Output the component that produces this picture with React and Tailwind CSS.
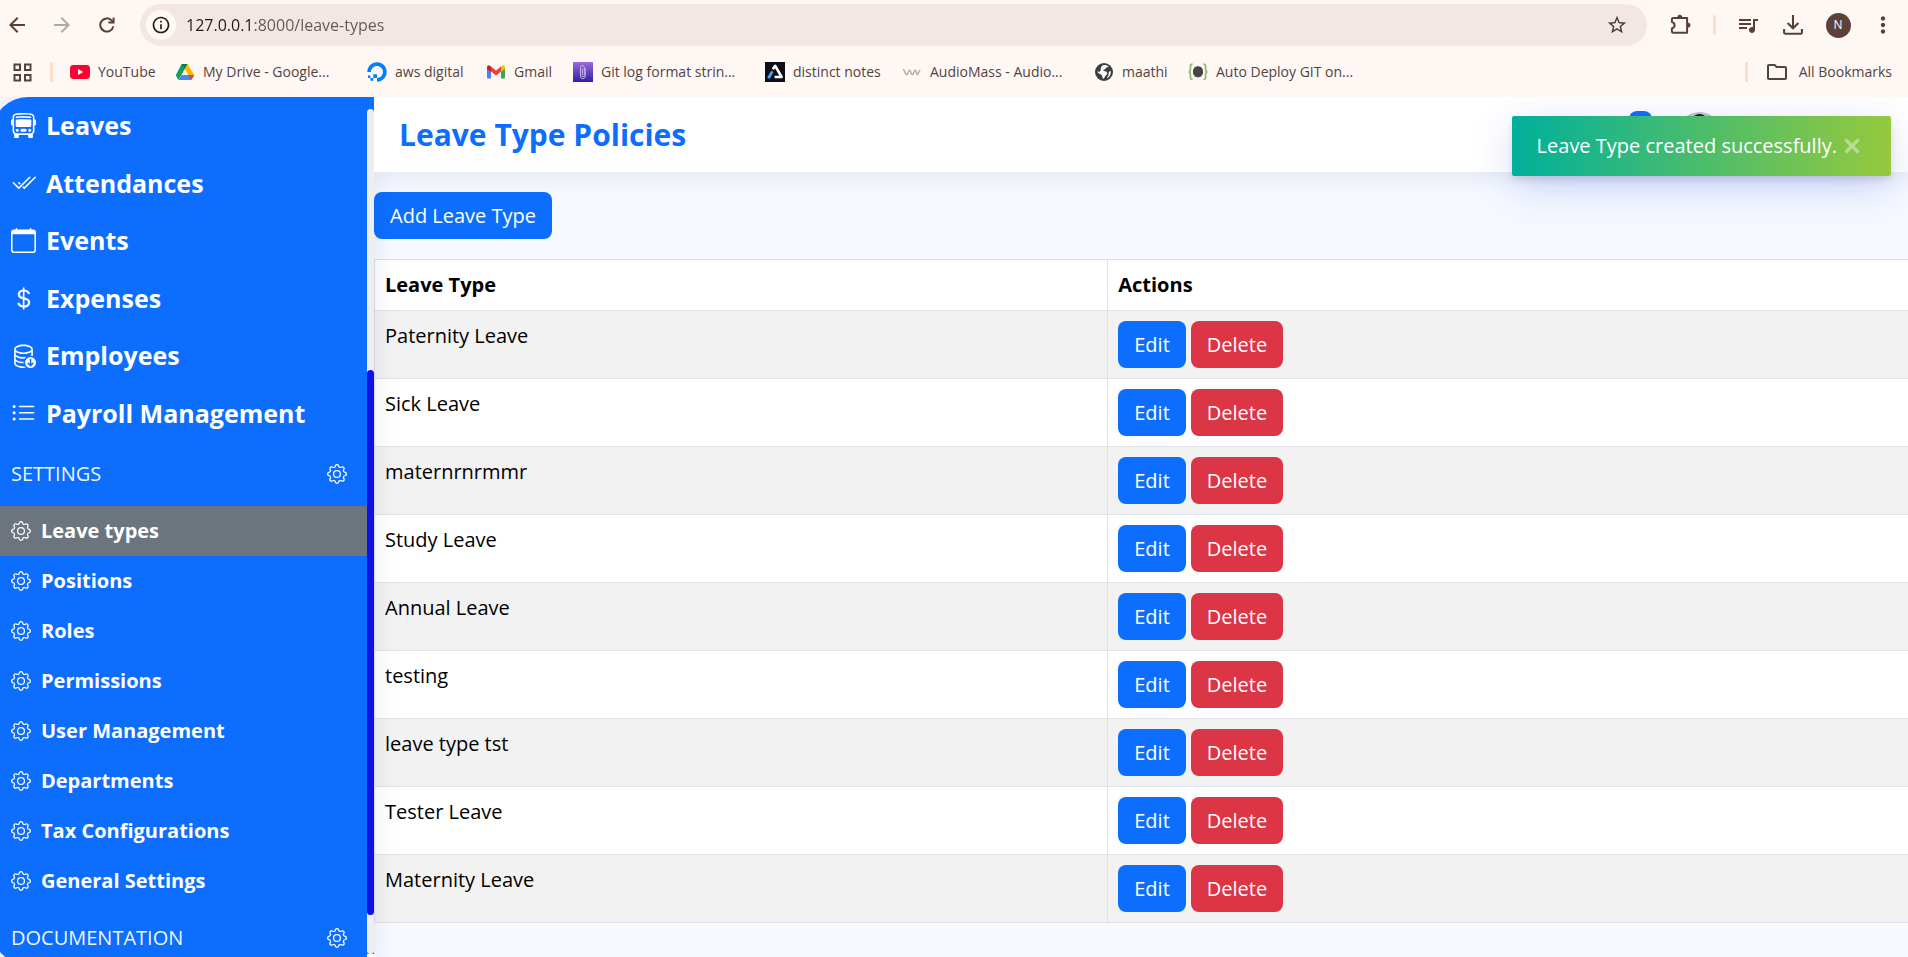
import React from "react";
import {
  BsBusFront,
  BsCheck2All,
  BsCalendar,
  BsCurrencyDollar,
  BsDatabaseDown,
  BsListUl,
  BsGear,
  BsBell,
} from "react-icons/bs";
import {
  MdArrowBack,
  MdArrowForward,
  MdInfoOutline,
  MdStarBorder,
  MdQueueMusic,
  MdOutlineFolder,
  MdMoreVert,
} from "react-icons/md";
import { FaDigitalOcean } from "react-icons/fa";

/* ---------- browser icons ---------- */

const ReloadIcon = () => (
  <svg viewBox="0 0 16 16" className="size-4" fill="none" stroke="currentColor" strokeWidth="2">
    <path d="M14.3 9.4A6.6 6.6 0 1 1 12.8 3.6L14 4.9" />
    <path d="M14.6 0.6V5.6H9.4" />
  </svg>
);

const ExtensionIcon = () => (
  <svg viewBox="0 0 22 22" className="size-[22px]">
    <path
      d="M3.2 3.9H17.1V18.7H3.2Q1.9 18.7 1.9 17.4V14.4C3.6 13.9 4.6 12.8 4.6 11.2S3.6 8.5 1.9 8V5.2Q1.9 3.9 3.2 3.9Z"
      fill="none"
      stroke="currentColor"
      strokeWidth="2"
      strokeLinejoin="round"
    />
    <path d="M7.4 3.4a2.4 2.6 0 0 1 4.8 0zM17.8 8.8a2.6 2.4 0 0 1 0 4.8z" fill="currentColor" />
  </svg>
);

const DownloadIcon = () => (
  <svg viewBox="0 0 20 20" className="size-5" fill="none" stroke="currentColor" strokeWidth="2.1">
    <path d="M10 0V13M4.6 8L10 13.3L15.4 8" />
    <path d="M1.1 14V17.4Q1.1 18.7 2.4 18.7H17.6Q18.9 18.7 18.9 17.4V14" />
  </svg>
);

const AppsIcon = () => (
  <svg viewBox="0 0 19 19" className="size-[19px]" fill="none" stroke="currentColor" strokeWidth="2">
    <rect x="1.5" y="1.5" width="5.5" height="5.5" />
    <rect x="12" y="1.5" width="5.5" height="5.5" />
    <rect x="1.5" y="12" width="5.5" height="5.5" />
    <rect x="12" y="12" width="5.5" height="5.5" />
  </svg>
);

/* ---------- bookmark favicons ---------- */

const YouTube = () => (
  <svg viewBox="0 0 20 20" className="size-5">
    <rect y="3" width="20" height="14" rx="3.4" fill="#ff0033" />
    <path d="M8 7v6l5.2-3z" fill="#fff" />
  </svg>
);

const Drive = () => (
  <svg viewBox="0 0 20 18" className="size-5">
    <path d="M6.6 1H12.6L6.4 12L3.4 17L0.8 12.2Z" fill="#11a15d" />
    <path d="M6.6 1H12.6L9.8 6.2Z" fill="#0b8043" />
    <path d="M12.6 1L19.2 12H13.2L9.8 6.1Z" fill="#ffba00" />
    <path d="M6.6 12H19.2L16.2 17H3.6Z" fill="#4688f4" />
    <path d="M13.2 12H19.2L16.4 16.7Z" fill="#ea4335" />
  </svg>
);

const Gmail = () => (
  <svg viewBox="0 0 20 20" className="size-5">
    <path d="M1 6V15.4Q1 16.6 2.2 16.6H5V8Z" fill="#4285f4" />
    <path d="M19 6V15.4Q19 16.6 17.8 16.6H15V8Z" fill="#34a853" />
    <path d="M5 4.6V9.6L10 13.4L15 9.6V4.6L10 8.4Z" fill="#ea4335" />
    <path d="M1 5.6V7L5 9.8V4.6L4 3.8Q1 2.4 1 5.6Z" fill="#c5221f" />
    <path d="M19 5.6V7L15 9.8V4.6L16 3.8Q19 2.4 19 5.6Z" fill="#fbbc04" />
  </svg>
);

const GitLog = () => (
  <svg viewBox="0 0 20 20" className="size-5">
    <defs>
      <linearGradient id="gitlog" x1="0" y1="0" x2="0" y2="1">
        <stop offset="0" stopColor="#9f6ad8" />
        <stop offset="1" stopColor="#2f1fa3" />
      </linearGradient>
    </defs>
    <rect width="20" height="20" fill="url(#gitlog)" />
    <path
      d="M12.3 6V14a2.4 2.6 0 0 1-4.8 0V5.6a1.9 2 0 0 1 3.8 0V13.6a1 1 0 0 1-2 0V6.6"
      fill="none"
      stroke="#cdbdf0"
      strokeWidth="0.9"
    />
  </svg>
);

const Distinct = () => (
  <svg viewBox="0 0 20 20" className="size-5">
    <rect width="20" height="20" fill="#0b1018" />
    <path d="M7.8 7.2L10.2 3.8L16.6 15H9.6" fill="none" stroke="#fff" strokeWidth="2.6" strokeLinejoin="round" />
    <path d="M7.4 9.4L3.4 16.2" fill="none" stroke="#4da3f0" strokeWidth="2.8" />
  </svg>
);

const AudioMass = () => (
  <svg viewBox="0 0 20 20" className="size-5" fill="none" stroke="#b3aeaa" strokeWidth="1.5">
    <path d="M1 8C2.6 7 3 12.6 4.6 12.6S6.4 8 7.6 8S9 12.6 10.4 12.6S12 8 13.2 8S14.4 12.6 15.6 12.6L18 8" />
  </svg>
);

const Globe = () => (
  <svg viewBox="0 0 20 20" className="size-5">
    <circle cx="10" cy="10" r="9" fill="#3c4043" />
    <path
      d="M9 3.2C11.4 2.6 13.4 3.4 14.6 4.6C13.6 5.8 12.2 5.2 11.6 6.4C11 7.6 9.4 7.2 9.2 8.4C10.4 9.4 13 8.8 13.2 11C13.4 13 11.4 13.2 11 14.6C10.7 15.8 10 16.6 8.8 16.8C8.2 15.2 8.6 13.4 7 12.6C5.2 11.8 4 11 3.2 9.6C5 9.8 6.2 9.8 6.6 8.4C7 6.8 6.4 4.6 9 3.2Z"
      fill="#fff8f5"
    />
    <path d="M16.8 9C17.2 12.6 15.4 15.2 13 16.4C13.2 14.4 15 13.6 14.6 11.4C14.4 10 15.4 9 16.8 9Z" fill="#fff8f5" />
  </svg>
);

const AutoDeploy = () => (
  <svg viewBox="0 0 20 20" className="size-5">
    <path
      d="M4.6 2.2C2.6 2.2 2.4 3 2.4 4.6V7.4C2.4 8.8 2 9.6 0.6 9.8C2 10 2.4 10.8 2.4 12.2V15C2.4 16.6 2.6 17.4 4.6 17.4M15.4 2.2C17.4 2.2 17.6 3 17.6 4.6V7.4C17.6 8.8 18 9.6 19.4 9.8C18 10 17.6 10.8 17.6 12.2V15C17.6 16.6 17.4 17.4 15.4 17.4"
      fill="none"
      stroke="#93ba80"
      strokeWidth="1.8"
    />
    <path d="M10 4L13.4 5.2L15 8L15 11.4L13.2 14.4L10 15.6L6.8 14.4L5 11.4V8L6.6 5.2Z" fill="#454647" />
  </svg>
);

const bookmarks = [
  { label: "YouTube", Icon: YouTube, width: "w-[57px]" },
  { label: "My Drive - Google...", Icon: Drive, width: "w-36" },
  { label: "aws digital", Icon: () => <FaDigitalOcean className="size-5 text-[#0080ff]" />, width: "w-[71px]" },
  { label: "Gmail", Icon: Gmail, width: "w-[39px]" },
  { label: "Git log format strin...", Icon: GitLog, width: "w-36" },
  { label: "distinct notes", Icon: Distinct, width: "w-[89px]" },
  { label: "AudioMass - Audio...", Icon: AudioMass, width: "w-36" },
  { label: "maathi", Icon: Globe, width: "w-[46px]" },
  { label: "Auto Deploy GIT on...", Icon: AutoDeploy, width: "w-36" },
];

const toolButton = "flex size-8 shrink-0 items-center justify-center";

function BrowserChrome() {
  return (
    <div className="shrink-0 bg-[#fff7f4] text-[#5a4034]">
      <div className="flex h-[50px] items-center pl-px pr-[9px]">
        <div className="flex gap-[13px]">
          <button aria-label="Back" className={toolButton}>
            <MdArrowBack className="size-6" />
          </button>
          <button aria-label="Forward" className={toolButton + " text-[#b5a8a2]"}>
            <MdArrowForward className="size-6" />
          </button>
          <button aria-label="Reload" className={toolButton}>
            <ReloadIcon />
          </button>
        </div>
        <div className="ml-[17px] mr-[18px] flex h-[42px] flex-1 items-center rounded-full bg-[#f2e7e4] pl-1.5 pr-4">
          <button
            aria-label="Site information"
            className="flex size-[30px] items-center justify-center rounded-full bg-[#fff8f5] text-[#231a17]"
          >
            <MdInfoOutline className="size-5" />
          </button>
          <input
            type="text"
            aria-label="Address"
            defaultValue="127.0.0.1:8000/leave-types"
            className="ml-2.5 min-w-0 flex-1 bg-[linear-gradient(to_right,#201a18_67px,#665650_67px)] bg-clip-text text-base text-transparent outline-none"
          />
          <button aria-label="Bookmark this tab" className="flex size-7 items-center justify-center text-[#4a3d38]">
            <MdStarBorder className="size-[22px]" />
          </button>
        </div>
        <button aria-label="Extensions" className={toolButton}>
          <ExtensionIcon />
        </button>
        <span className="mx-4 h-5 w-[3px] rounded-full bg-[#ffdcc8]" />
        <div className="flex gap-[13px]">
          <button aria-label="Media controls" className={toolButton}>
            <MdQueueMusic className="size-6" />
          </button>
          <button aria-label="Downloads" className={toolButton}>
            <DownloadIcon />
          </button>
          <button aria-label="Profile" className={toolButton}>
            <span className="flex size-[25px] items-center justify-center rounded-full bg-[#5d4037] text-xs text-white">
              N
            </span>
          </button>
          <button aria-label="Menu" className={toolButton}>
            <MdMoreVert className="size-[26px]" />
          </button>
        </div>
      </div>
      <div className="flex h-[47px] items-center pb-[3px] pl-[13px] pr-4 text-sm text-[#51443f]">
        <button aria-label="Apps">
          <AppsIcon />
        </button>
        <span className="ml-[18px] mr-[17px] h-5 w-[3px] rounded-full bg-[#ffdcc8]" />
        <div className="flex gap-5">
          {bookmarks.map(({ label, Icon, width }) => (
            <a key={label} href="#" className="flex items-center gap-2 whitespace-nowrap">
              <Icon />
              <span className={width}>{label}</span>
            </a>
          ))}
        </div>
        <span className="ml-auto mr-[17px] h-5 w-[3px] rounded-full bg-[#ffdcc8]" />
        <button className="flex items-center gap-2.5 whitespace-nowrap">
          <MdOutlineFolder className="size-6" />
          All Bookmarks
        </button>
      </div>
    </div>
  );
}

/* ---------- application ---------- */

const mainLinks = [
  { label: "Leaves", Icon: BsBusFront },
  { label: "Attendances", Icon: BsCheck2All },
  { label: "Events", Icon: BsCalendar },
  { label: "Expenses", Icon: BsCurrencyDollar },
  { label: "Employees", Icon: BsDatabaseDown },
  { label: "Payroll Management", Icon: BsListUl },
];

const settingLinks = [
  "Leave types",
  "Positions",
  "Roles",
  "Permissions",
  "User Management",
  "Departments",
  "Tax Configurations",
  "General Settings",
];

const leaveTypes = [
  "Paternity Leave",
  "Sick Leave",
  "maternrnrmmr",
  "Study Leave",
  "Annual Leave",
  "testing",
  "leave type tst",
  "Tester Leave",
  "Maternity Leave",
];

function SectionHeading({ children }) {
  return (
    <div className="flex h-16 items-center justify-between pl-[11px] pr-5 text-xl text-white/95">
      <span>{children}</span>
      <BsGear className="size-5 text-white" />
    </div>
  );
}

function Sidebar() {
  return (
    <aside className="z-10 -mb-2 -ml-2 flex w-[382px] shrink-0 overflow-hidden rounded-l-[36px] bg-[#0d6efd] pl-2 text-white shadow-[0_0_25px_rgba(1,41,112,0.1)]">
      <nav className="min-w-0 flex-1">
        <div className="flex h-[345px] flex-col">
          {mainLinks.map(({ label, Icon }) => (
            <a key={label} href="#" className="flex flex-1 items-center gap-2.5 pl-[11px] text-[25px] font-bold">
              <Icon className="size-[25px]" />
              {label}
            </a>
          ))}
        </div>
        <SectionHeading>SETTINGS</SectionHeading>
        {settingLinks.map((label, i) => (
          <a
            key={label}
            href="#"
            className={
              "flex h-[50px] items-center gap-2.5 pl-[11px] text-xl font-bold " + (i === 0 ? "bg-[#6c757d]" : "")
            }
          >
            <BsGear className="size-5" />
            {label}
          </a>
        ))}
        <SectionHeading>DOCUMENTATION</SectionHeading>
      </nav>
      <div className="flex w-[7px] flex-col pt-3">
        <div className="flex flex-1 flex-col rounded-t-full rounded-b-full bg-[#eeeeee]">
          <div className="basis-[261px]" />
          <div className="basis-[545px] rounded-full bg-[#1010e8]" />
        </div>
        <div className="h-[11px] bg-white" />
      </div>
    </aside>
  );
}

const button = "h-[47px] rounded-lg px-4 text-xl text-white";

function LeaveTable() {
  return (
    <div className="-mr-px">
      <table className="w-full table-fixed border-collapse text-left text-xl leading-[30px] text-black">
        <thead>
          <tr className="bg-white">
            <th className="w-[47.8%] border border-[#dee2e6] px-2.5 py-2.5 font-bold">Leave Type</th>
            <th className="border border-[#dee2e6] px-2.5 py-2.5 font-bold">Actions</th>
          </tr>
        </thead>
        <tbody>
          {leaveTypes.map((name) => (
            <tr key={name} className="bg-white odd:bg-[#f2f2f2]">
              <td className="border border-[#dee2e6] px-2.5 py-2.5 align-top">{name}</td>
              <td className="border border-[#dee2e6] px-2.5 py-2.5">
                <div className="flex gap-[5px]">
                  <button className={button + " bg-[#0d6efd]"}>Edit</button>
                  <button className={button + " bg-[#dc3545]"}>Delete</button>
                </div>
              </td>
            </tr>
          ))}
        </tbody>
      </table>
    </div>
  );
}

function Toast() {
  return (
    <div
      role="status"
      className="absolute right-[17px] top-[19px] z-30 flex h-[60px] items-center rounded-xs bg-[linear-gradient(to_right,#00b09b,#96c93d)] px-[25px] text-xl text-white shadow-[0_4px_8px_-1px_rgba(0,0,0,0.12),0_12px_45px_-5px_rgba(77,96,232,0.3)]"
    >
      Leave Type created successfully.
      <button aria-label="Close" className="ml-[7px] mr-1.5 opacity-40">
        <svg viewBox="0 0 16 16" className="size-4" fill="none" stroke="currentColor" strokeWidth="3.2">
          <path d="M1.5 1.5L14.5 14.5M14.5 1.5L1.5 14.5" />
        </svg>
      </button>
    </div>
  );
}

export default function App() {
  return (
    <div className="flex h-screen flex-col overflow-hidden bg-[#f6f9ff] font-['Open_Sans','Noto_Sans',sans-serif]">
      <BrowserChrome />
      <div className="relative flex min-h-0 flex-1 overflow-hidden">
        <Sidebar />
        <div className="min-w-0 flex-1">
          <header className="relative z-20 flex h-[75px] items-center justify-between bg-white pl-[25px] pr-[186px] shadow-[0_3px_25px_rgba(1,41,112,0.1)] [clip-path:inset(0_0_-40px_0)]">
            <h1 className="text-3xl font-bold text-[#0d6efd]">Leave Type Policies</h1>
            <div className="flex items-center gap-[42px]">
              <button aria-label="Notifications" className="relative">
                <BsBell className="size-[25px]" />
                <span className="absolute -top-[11px] left-[19px] h-[18px] w-[23px] rounded-lg bg-[#0d6efd]" />
              </button>
              <button aria-label="Account">
                <svg viewBox="0 0 45 45" className="size-[45px]">
                  <circle cx="22.5" cy="22.5" r="22.5" fill="#c4c5c9" />
                  <ellipse cx="22.5" cy="14" rx="10" ry="12" fill="#1a1a1a" />
                </svg>
              </button>
            </div>
          </header>
          <main className="pt-5">
            <button className={button + " mb-5 block bg-[#0d6efd]"}>Add Leave Type</button>
            <LeaveTable />
          </main>
        </div>
        <Toast />
      </div>
    </div>
  );
}
